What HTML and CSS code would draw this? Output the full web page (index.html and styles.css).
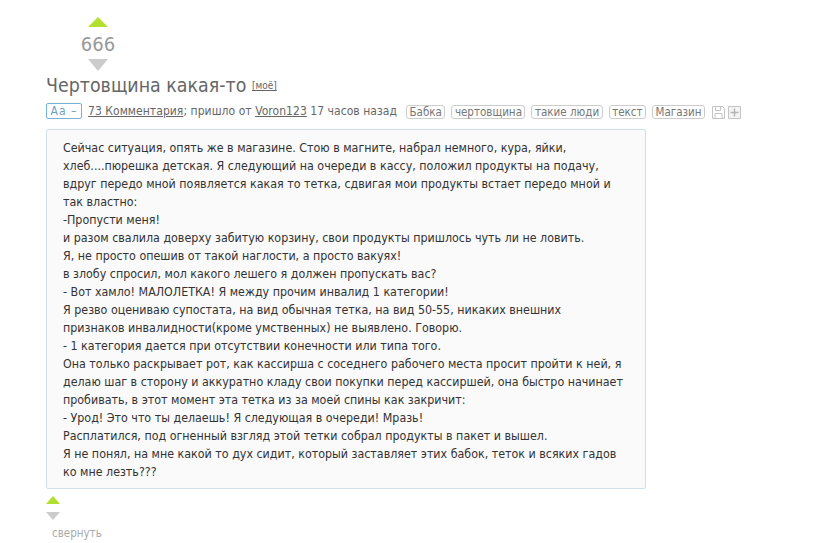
FILE: index.html
```html
<!DOCTYPE html>
<html lang="ru">
<head>
    <meta charset="UTF-8">
    <title>Чертовщина какая-то</title>
    <link rel="stylesheet" href="styles.css">
</head>
<body>
    <div class="vote">
        <div class="arrow-up"></div>
        <div class="score">666</div>
        <div class="arrow-down"></div>
    </div>
    <h1 class="title">Чертовщина какая-то <a class="mine" href="#">[моё]</a></h1>
    <div class="meta">
        <span class="font-btn">Аа –</span>
        <span class="info"><a href="#">73 Комментария</a>; пришло от <a href="#">Voron123</a> 17 часов назад</span>
        <span class="tags">
            <a class="tag" href="#">Бабка</a>
            <a class="tag" href="#">чертовщина</a>
            <a class="tag" href="#">такие люди</a>
            <a class="tag" href="#">текст</a>
            <a class="tag" href="#">Магазин</a>
        </span>
        <svg class="icon" width="13" height="13" viewBox="0 0 13 13"><path d="M.5.5h10l2 2v10H.5zM3.5.5v4h5v-4M3 12.5v-5h7v5" fill="none" stroke="#c4c4c4"/></svg>
        <svg class="icon plus" width="13" height="13" viewBox="0 0 13 13"><path d="M.5.5h12v12H.5z" fill="#f4f4f4" stroke="#c4c4c4"/><path d="M6.5 2.5v8M2.5 6.5h8" fill="none" stroke="#b4b4b4" stroke-width="1.4"/></svg>
    </div>
    <div class="story">
        Сейчас ситуация, опять же в магазине. Стою в магните, набрал немного, кура, яйки,<br>
        хлеб....пюрешка детская. Я следующий на очереди в кассу, положил продукты на подачу,<br>
        вдруг передо мной появляется какая то тетка, сдвигая мои продукты встает передо мной и<br>
        так властно:<br>
        -Пропусти меня!<br>
        и разом свалила доверху забитую корзину, свои продукты пришлось чуть ли не ловить.<br>
        Я, не просто опешив от такой наглости, а просто вакуях!<br>
        в злобу спросил, мол какого лешего я должен пропускать вас?<br>
        - Вот хамло! МАЛОЛЕТКА! Я между прочим инвалид 1 категории!<br>
        Я резво оцениваю супостата, на вид обычная тетка, на вид 50-55, никаких внешних<br>
        признаков инвалидности(кроме умственных) не выявлено. Говорю.<br>
        - 1 категория дается при отсутствии конечности или типа того.<br>
        Она только раскрывает рот, как кассирша с соседнего рабочего места просит пройти к ней, я<br>
        делаю шаг в сторону и аккуратно кладу свои покупки перед кассиршей, она быстро начинает<br>
        пробивать, в этот момент эта тетка из за моей спины как закричит:<br>
        - Урод! Это что ты делаешь! Я следующая в очереди! Мразь!<br>
        Расплатился, под огненный взгляд этой тетки собрал продукты в пакет и вышел.<br>
        Я не понял, на мне какой то дух сидит, который заставляет этих бабок, теток и всяких гадов<br>
        ко мне лезть???
    </div>
    <div class="story-vote">
        <div class="arrow-up small"></div>
        <div class="arrow-down small"></div>
    </div>
    <a class="collapse" href="#">свернуть</a>
</body>
</html>
```
FILE: styles.css
```css
body {
    margin: 0;
    padding: 17px 0 0 46px;
    background-color: white;
    font-family: "DejaVu Sans Condensed", "DejaVu Sans", sans-serif;
    font-stretch: condensed;
    font-size: 12px;
    color: #666;
    height: 526px;
    overflow: hidden;
}
a {
    color: #666;
}
.vote {
    width: 104px;
    display: flex;
    flex-direction: column;
    align-items: center;
}
.arrow-up {
    width: 0;
    height: 0;
    border-left: 10px solid transparent;
    border-right: 10px solid transparent;
    border-bottom: 10px solid #b3e02f;
}
.arrow-down {
    width: 0;
    height: 0;
    border-left: 10px solid transparent;
    border-right: 10px solid transparent;
    border-top: 12px solid #ccc;
}
.score {
    font-size: 20px;
    padding-top: 3px;
    line-height: 29px;
    color: #999;
}
.title {
    margin: 2px 0 0;
    font-size: 19.4px;
    font-weight: normal;
    line-height: 26px;
    color: #666;
}
.mine {
    font-size: 10px;
    vertical-align: 3px;
}
.meta {
    display: flex;
    align-items: center;
    height: 20px;
    margin-top: 2px;
}
.font-btn {
    width: 34px;
    height: 14px;
    line-height: 14px;
    border: 1px solid #7ab0d8;
    border-radius: 2px;
    color: #6f9fc4;
    text-align: center;
    letter-spacing: 1px;
    margin-right: 6px;
}
.info {
    letter-spacing: 0.05px;
}
.tags {
    display: flex;
    gap: 6px;
    margin-left: 9px;
    margin-top: 2px;
}
.tag {
    border: 1px solid #ccc;
    border-radius: 3px;
    padding: 0 2.5px;
    font-size: 11.5px;
    line-height: 12px;
    color: #777;
    text-decoration: none;
}
.icon {
    margin: 3px 0 0 7px;
}
.icon.plus {
    margin-left: 3px;
}
.story {
    width: 566px;
    margin-top: 8px;
    padding: 9px 16px 7px;
    border: 1px solid #d0dfe9;
    border-radius: 2px;
    background-color: #fafafa;
    color: #333;
    font-size: 12.35px;
    line-height: 18px;
    white-space: nowrap;
}
.story-vote {
    margin-top: 7px;
}
.arrow-up.small {
    border-left-width: 7px;
    border-right-width: 7px;
    border-bottom-width: 8px;
}
.arrow-down.small {
    border-left-width: 7px;
    border-right-width: 7px;
    border-top-width: 8px;
    margin-top: 8px;
}
.collapse {
    display: block;
    margin: 6px 0 0 6px;
    font-size: 11.5px;
    color: #aaa;
    text-decoration: none;
}
```
